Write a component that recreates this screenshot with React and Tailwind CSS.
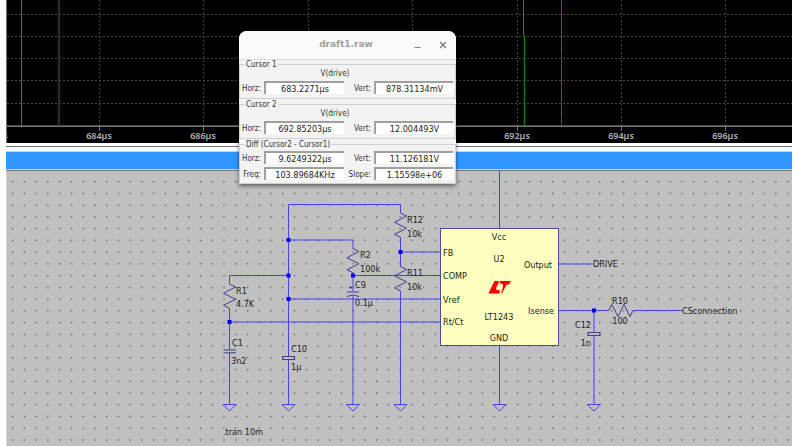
import { Minus, X } from "lucide-react";

// 308 and 412 sit behind the cursor window, so they only get a grid line
const TICKS = [
  { x: 99, label: "684µs" },
  { x: 203, label: "686µs" },
  { x: 308 },
  { x: 412 },
  { x: 517, label: "692µs" },
  { x: 621, label: "694µs" },
  { x: 725, label: "696µs" },
];
const ROWS = [14, 36, 58, 80, 103];

const Waveform = () => (
  <div className="h-[143px] overflow-hidden border-l border-gray-500 bg-black">
    <svg className="block h-full w-full">
      <g transform="translate(-7 0)">
        <g stroke="#424242" strokeDasharray="2 2">
          {ROWS.map((y) => (
            <line key={y} x1="7" x2="110%" y1={y + 0.5} y2={y + 0.5} />
          ))}
          {TICKS.map(({ x }) => (
            <line key={x} x1={x + 0.5} x2={x + 0.5} y1="0" y2="125" />
          ))}
        </g>
        <line x1="7" x2="110%" y1="125.5" y2="125.5" stroke="#4a4a4a" />
        <line x1="7" x2="110%" y1="126.5" y2="126.5" stroke="#777" />

        {/* trace */}
        <path d="M21.5 0V126M523.5 0V35" stroke="#109a10" fill="none" />
        <path d="M524.5 35V126" stroke="#087a08" strokeWidth="1.5" fill="none" />

        {/* cursors */}
        <path d="M59 0V126" stroke="#4c0a4c" strokeWidth="2" fill="none" />
        <path d="M59 0V126" stroke="#0a4a1c" strokeWidth="2" strokeDasharray="2 2" fill="none" />
        <path d="M561.5 0V126" stroke="#990099" fill="none" />
        <path d="M561.5 0V126" stroke="#0c8a0c" strokeDasharray="2 2" fill="none" />

        <g className="font-['Noto_Sans'] text-[9px] font-semibold" fill="#b4b4b4" textAnchor="middle">
          <text x="-5" y="139" fill="#b08040">682µs</text>
          {TICKS.map(({ x, label }) => (
            <g key={x}>
              <line x1={x + 0.5} x2={x + 0.5} y1="126" y2="131" stroke="#777" />
              {label && <text x={x} y="139">{label}</text>}
            </g>
          ))}
        </g>
      </g>
    </svg>
  </div>
);

const Resistor = ({ x, y, flat }) => (
  <path
    transform={`translate(${x} ${y})${flat ? " rotate(-90)" : ""}`}
    d="M0 0L6 3L-6 9.3L6 15.3L-6 21.3L0 24.3"
    stroke="#3c3c96"
    fill="none"
  />
);

const Ground = ({ x }) => <path d={`M${x - 6.5} 404.5H${x + 6.5}L${x} 411Z`} stroke="#4444ee" fill="none" />;

const Node = ({ x, y }) => <rect x={x - 2} y={y - 2} width="4" height="4" fill="#0000ff" />;

const NODES = [
  [288.5, 240],
  [288.5, 275.5],
  [288.5, 299],
  [229.5, 322],
  [353, 275.5],
  [400.5, 252],
  [594, 310.5],
];

const LABELS = [
  [236, 294, "R1"],
  [236, 307, "4.7K"],
  [232, 346, "C1"],
  [231, 364, "3n2"],
  [291, 352, "C10"],
  [291, 370, "1µ"],
  [360, 258, "R2"],
  [360, 272, "100k"],
  [355, 288, "C9"],
  [355, 306, "0.1µ"],
  [407, 223, "R12"],
  [407, 237, "10k"],
  [407, 276, "R11"],
  [407, 290, "10k"],
  [443, 256, "FB"],
  [443, 279, "COMP"],
  [443, 303, "Vref"],
  [443, 325, "Rt/Ct"],
  [593, 267, "DRIVE"],
  [682, 314, "CSconnection"],
  [223, 435, ".tran 10m"],
  [499, 240, "Vcc", "middle"],
  [499, 262, "U2", "middle"],
  [499, 320, "LT1243", "middle"],
  [499, 341, "GND", "middle"],
  [620, 304, "R10", "middle"],
  [620, 324, "100", "middle"],
  [552, 268, "Output", "end"],
  [554, 314, "Isense", "end"],
  [591, 328, "C12", "end"],
  [591, 346, "1n", "end"],
];

const Schematic = () => (
  <div className="overflow-hidden border-l border-gray-300 bg-[#c0c0c0]">
    <svg className="block h-[275px] w-full">
      <defs>
        <pattern id="grid" x="12" y="181" width="11.742" height="11.742" patternUnits="userSpaceOnUse">
          <rect width="1.3" height="1.3" fill="#555" />
        </pattern>
      </defs>
      <g transform="translate(-7 -171)">
        <rect x="7" y="175" width="100%" height="271" fill="url(#grid)" />

        {/* chip body */}
        <rect x="440.5" y="228.5" width="118" height="117" fill="#ffffc0" stroke="#4a4aa0" />

        {/* wires */}
        <path
          d="M288.5 356V204.5H400.5V213M288.5 240H353V249M353 272.5V291M353 296V404.5M400.5 237V267M400.5 291V404.5M400.5 252H440M353 275.5H440M288.5 299H440M288.5 275.5H229.5V284M229.5 308V350M229.5 353V404.5M229.5 322H440M288.5 359.5V404.5M499.5 171V228M499.5 346V404.5M559 264H593M559 310.5H609M633 310.5H682M594 310.5V332M594 336V404.5"
          stroke="#4444ee"
          fill="none"
        />

        <Resistor x={229.5} y={284} />
        <Resistor x={353} y={248.5} />
        <Resistor x={400.5} y={213} />
        <Resistor x={400.5} y={266.5} />
        <Resistor x={608.7} y={310.5} flat />

        {/* capacitors */}
        <g stroke="#3c3c96" fill="none">
          <path d="M223.5 350H236M223.5 352.8H236" />
          <rect x="282.5" y="356.5" width="12" height="3" />
          <rect x="588" y="332.5" width="12" height="3" />
          <path d="M347 292H359M347 296.5Q353 293.5 359 296.5M349 287.5H352M350.5 286V289" />
        </g>

        {[229.5, 288.5, 353, 400.5, 499.5, 594].map((x) => (
          <Ground key={x} x={x} />
        ))}
        {NODES.map(([x, y]) => (
          <Node key={`${x}-${y}`} x={x} y={y} />
        ))}

        {/* chip logo */}
        <path
          d="M494.500 281H498.500L498.800 283L496.500 286.500L496 289.500L500 290.500L499.500 293.500H488.300ZM499.500 281H511L509 284.500H506.800L501.800 293.500H501L502.800 287.500L503 284.500L499.800 283Z"
          fill="#f00"
        />

        <g className="font-['DejaVu_Sans_Condensed','DejaVu_Sans',sans-serif] text-[9px]" fill="#222">
          {LABELS.map(([x, y, text, anchor]) => (
            <text key={`${x}-${y}`} x={x} y={y} textAnchor={anchor || "start"}>
              {text}
            </text>
          ))}
        </g>
      </g>
    </svg>
  </div>
);

const Field = ({ id, label, value }) => (
  <>
    <label htmlFor={id} className="pt-0.5 text-right leading-[11px]">{label}</label>
    <input
      id={id}
      defaultValue={value}
      className="h-[13px] w-full min-w-0 border-t-2 border-l-2 border-[#a0a0a0] bg-white text-center text-[9px] leading-none text-[#222] outline-none"
    />
  </>
);

const Group = ({ title, signal, children }) => (
  <fieldset className={`min-w-0 border border-[#cfcfcf] pr-0.5 pl-px ${signal ? "pb-1" : "pb-[3px]"}`}>
    <legend className="ml-1 px-px leading-[9px]">{title}</legend>
    {signal && <p className="mb-[3px] pr-6 text-center leading-[9px]">{signal}</p>}
    <div className={`grid grid-cols-[20px_80px_24px_1fr] items-center gap-[3px] ${signal ? "" : "pt-0.5"}`}>{children}</div>
  </fieldset>
);

const CursorDialog = () => (
  <section className="absolute top-[31px] left-[239px] w-[217px] overflow-hidden rounded-t-lg bg-[#f3f3f3] font-['DejaVu_Sans_Condensed','DejaVu_Sans',sans-serif] text-[8px] text-[#333] shadow-[0_2px_4px_rgba(0,0,0,0.5)]">
    <header className="flex h-[29px] items-center border-b border-[#dcdcdc] bg-[#fafafa] pr-2">
      <h1 className="flex-1 pl-10 text-center font-['DejaVu_Sans'] text-[9px] font-bold text-[#a0a0a0]">draft1.raw</h1>
      <button aria-label="Minimize" className="mr-4 pt-1 text-[#888]">
        <Minus size={9} strokeWidth={3} />
      </button>
      <button aria-label="Close" className="text-[#777]">
        <X size={10} strokeWidth={3} />
      </button>
    </header>
    <div className="flex flex-col gap-px">
      <Group title="Cursor 1" signal="V(drive)">
        <Field id="c1-horz" label="Horz:" value="683.2271µs" />
        <Field id="c1-vert" label="Vert:" value="878.31134mV" />
      </Group>
      <Group title="Cursor 2" signal="V(drive)">
        <Field id="c2-horz" label="Horz:" value="692.85203µs" />
        <Field id="c2-vert" label="Vert:" value="12.004493V" />
      </Group>
      <Group title="Diff (Cursor2 - Cursor1)">
        <Field id="diff-horz" label="Horz:" value="9.6249322µs" />
        <Field id="diff-vert" label="Vert:" value="11.126181V" />
        <Field id="diff-freq" label="Freq:" value="103.89684KHz" />
        <Field id="diff-slope" label="Slope:" value="1.15598e+06" />
      </Group>
    </div>
  </section>
);

export default function App() {
  return (
    <main className="relative min-h-screen overflow-hidden bg-white pr-px pl-1.5">
      <Waveform />
      {/* splitter */}
      <div className="h-2 bg-white pt-[3px]">
        <div className="h-px bg-gray-500" />
      </div>
      <div className="h-[19px] border-y border-[#b8dcff] bg-[#3296ff]" />
      <div className="h-px bg-[#777]" />
      <Schematic />
      <CursorDialog />
    </main>
  );
}
